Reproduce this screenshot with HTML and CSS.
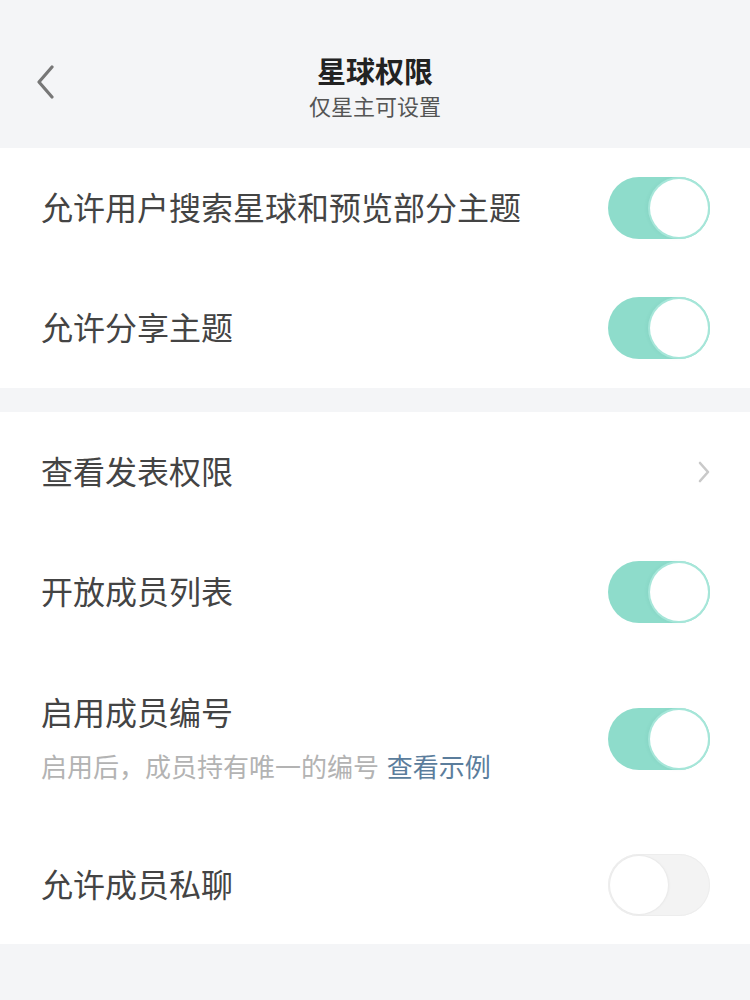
FILE: index.html
```html
<!doctype html>
<html>
<head>
<meta charset="utf-8">
<title>星球权限</title>
<link rel="stylesheet" href="styles.css">
</head>
<body>
<div class="header">
	<div class="back">
		<svg width="20" height="34" viewBox="0 0 20 34"><path d="M16 2 L3 17 L16 32" fill="none" stroke="#777" stroke-width="3.2" stroke-linecap="round" stroke-linejoin="round"/></svg>
	</div>
	<div class="heading">
		<div class="title">星球权限</div>
		<div class="sub">仅星主可设置</div>
	</div>
	<div></div>
</div>

<ul class="group">
	<li class="row">
		<span class="label">允许用户搜索星球和预览部分主题</span>
		<span class="switch on"><i></i></span>
	</li>
	<li class="row">
		<span class="label">允许分享主题</span>
		<span class="switch on"><i></i></span>
	</li>
</ul>

<ul class="group">
	<li class="row">
		<span class="label">查看发表权限</span>
		<svg class="arrow" width="14" height="24" viewBox="0 0 14 24"><path d="M3 3 L11 12 L3 21" fill="none" stroke="#c9c9c9" stroke-width="2.6" stroke-linecap="round" stroke-linejoin="round"/></svg>
	</li>
	<li class="row">
		<span class="label">开放成员列表</span>
		<span class="switch on"><i></i></span>
	</li>
	<li class="row tall">
		<div class="text">
			<div class="label">启用成员编号</div>
			<div class="desc">启用后，成员持有唯一的编号 <a href="#">查看示例</a></div>
		</div>
		<span class="switch on"><i></i></span>
	</li>
	<li class="row last">
		<span class="label">允许成员私聊</span>
		<span class="switch"><i></i></span>
	</li>
</ul>
</body>
</html>
```

FILE: styles.css
```css
*{margin:0; padding:0; list-style:none; box-sizing:border-box;}
body{background:#f4f5f7; font-family:"Noto Sans CJK SC","Noto Sans",sans-serif; color:#444;}

.header{height:148px; display:grid; grid-template-columns:1fr auto 1fr; align-items:start;}
.back{padding:65px 0 0 36px;}
.back svg{display:block;}
.heading{padding-top:50px; text-align:center;}
.title{font-size:29px; line-height:40px; font-weight:bold; color:#222;}
.sub{font-size:22px; line-height:30px; color:#555;}

.group{background:#fff; margin-bottom:24px;}
.row{height:120px; padding:0 40px 0 41px; display:flex; align-items:center; justify-content:space-between;}
.row.tall{height:174px;}
.row.last{height:118px;}
.label{font-size:32px; line-height:44px; color:#444; padding-bottom:4px;}
.tall .text{padding-bottom:6px;}
.tall .label{padding-bottom:0;}
.desc{margin-top:15px; font-size:26px; line-height:36px; color:#b3b3b3;}
.desc a{color:#5b7d9c; text-decoration:none; margin-left:2px;}
.arrow{display:block; margin-right:-1px;}

.switch{width:102px; height:62px; border-radius:31px; padding:2px; display:flex; background:#f3f3f3; box-shadow:inset 0 0 0 1px #ededed;}
.switch i{width:58px; height:58px; border-radius:50%; background:#fff; box-shadow:0 0 0 1px #ebebeb, 1px 0 3px rgba(0,0,0,.04);}
.switch.on{background:#8edccb; box-shadow:none; justify-content:flex-end;}
.switch.on i{box-shadow:0 0 0 2px #a6e6d9, -2px 0 4px rgba(60,140,120,.12);}
```
